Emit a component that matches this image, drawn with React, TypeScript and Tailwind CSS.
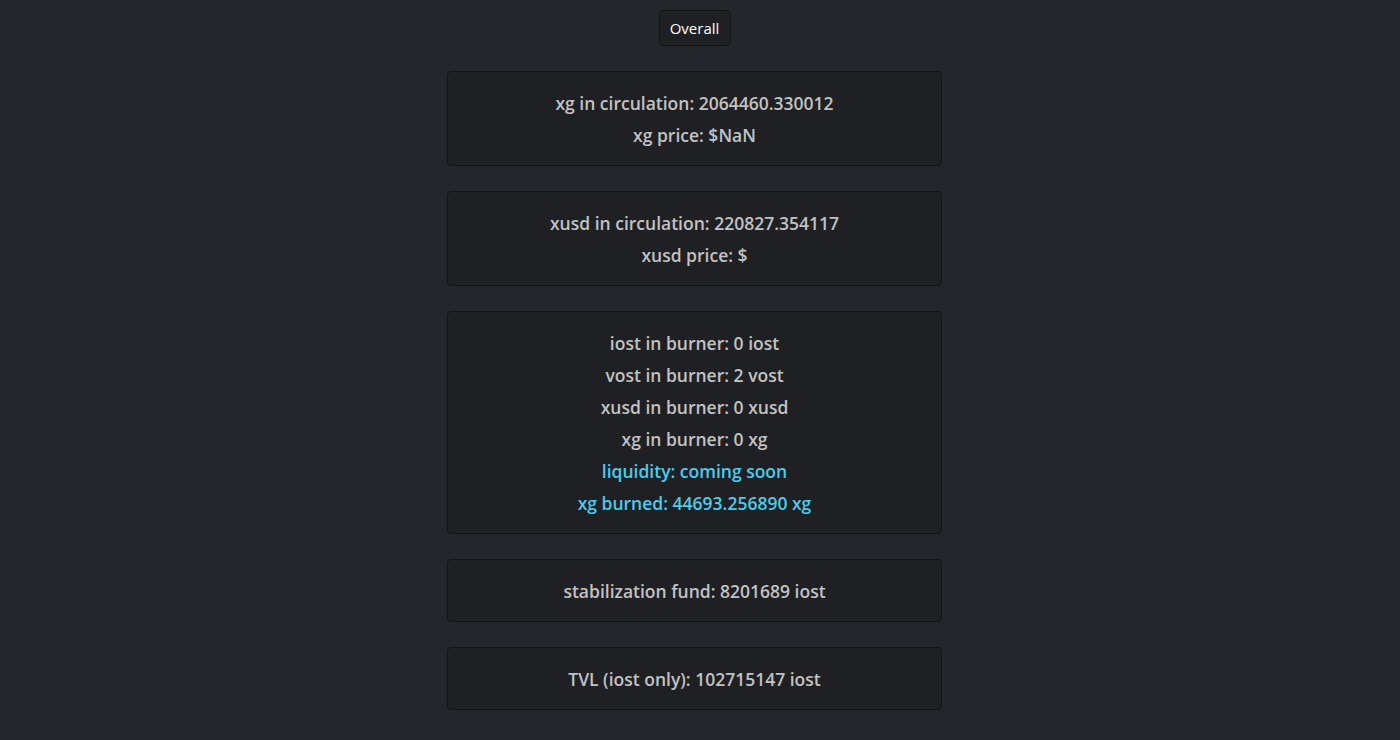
const cards: { text: string; accent?: boolean }[][] = [
  [{ text: "xg in circulation: 2064460.330012" }, { text: "xg price: $NaN" }],
  [{ text: "xusd in circulation: 220827.354117" }, { text: "xusd price: $" }],
  [
    { text: "iost in burner: 0 iost" },
    { text: "vost in burner: 2 vost" },
    { text: "xusd in burner: 0 xusd" },
    { text: "xg in burner: 0 xg" },
    { text: "liquidity: coming soon", accent: true },
    { text: "xg burned: 44693.256890 xg", accent: true },
  ],
  [{ text: "stabilization fund: 8201689 iost" }],
  [{ text: "TVL (iost only): 102715147 iost" }],
];

export default function App() {
  return (
    <div
      className="min-h-screen bg-[#23262b] flex flex-col items-center pt-[10px] pr-[11px] pb-10 gap-[25px]"
      style={{ fontFamily: '"Open Sans", "Noto Sans", sans-serif' }}
    >
      <button className="h-[36px] w-[72px] rounded-[4px] border border-[#121316] bg-[#1f2024] text-[15px] text-white">
        Overall
      </button>
      {cards.map((lines, i) => (
        <div
          key={i}
          className="w-[495px] rounded-[4px] border border-[#121316] bg-[#1f2024] py-[14.5px] text-center"
        >
          {lines.map((line) => (
            <p
              key={line.text}
              className={`text-[17.5px] font-semibold leading-[32px] ${line.accent ? "text-[#4ccbec]" : "text-[#c2c2c2]"}`}
            >
              {line.text}
            </p>
          ))}
        </div>
      ))}
    </div>
  );
}
